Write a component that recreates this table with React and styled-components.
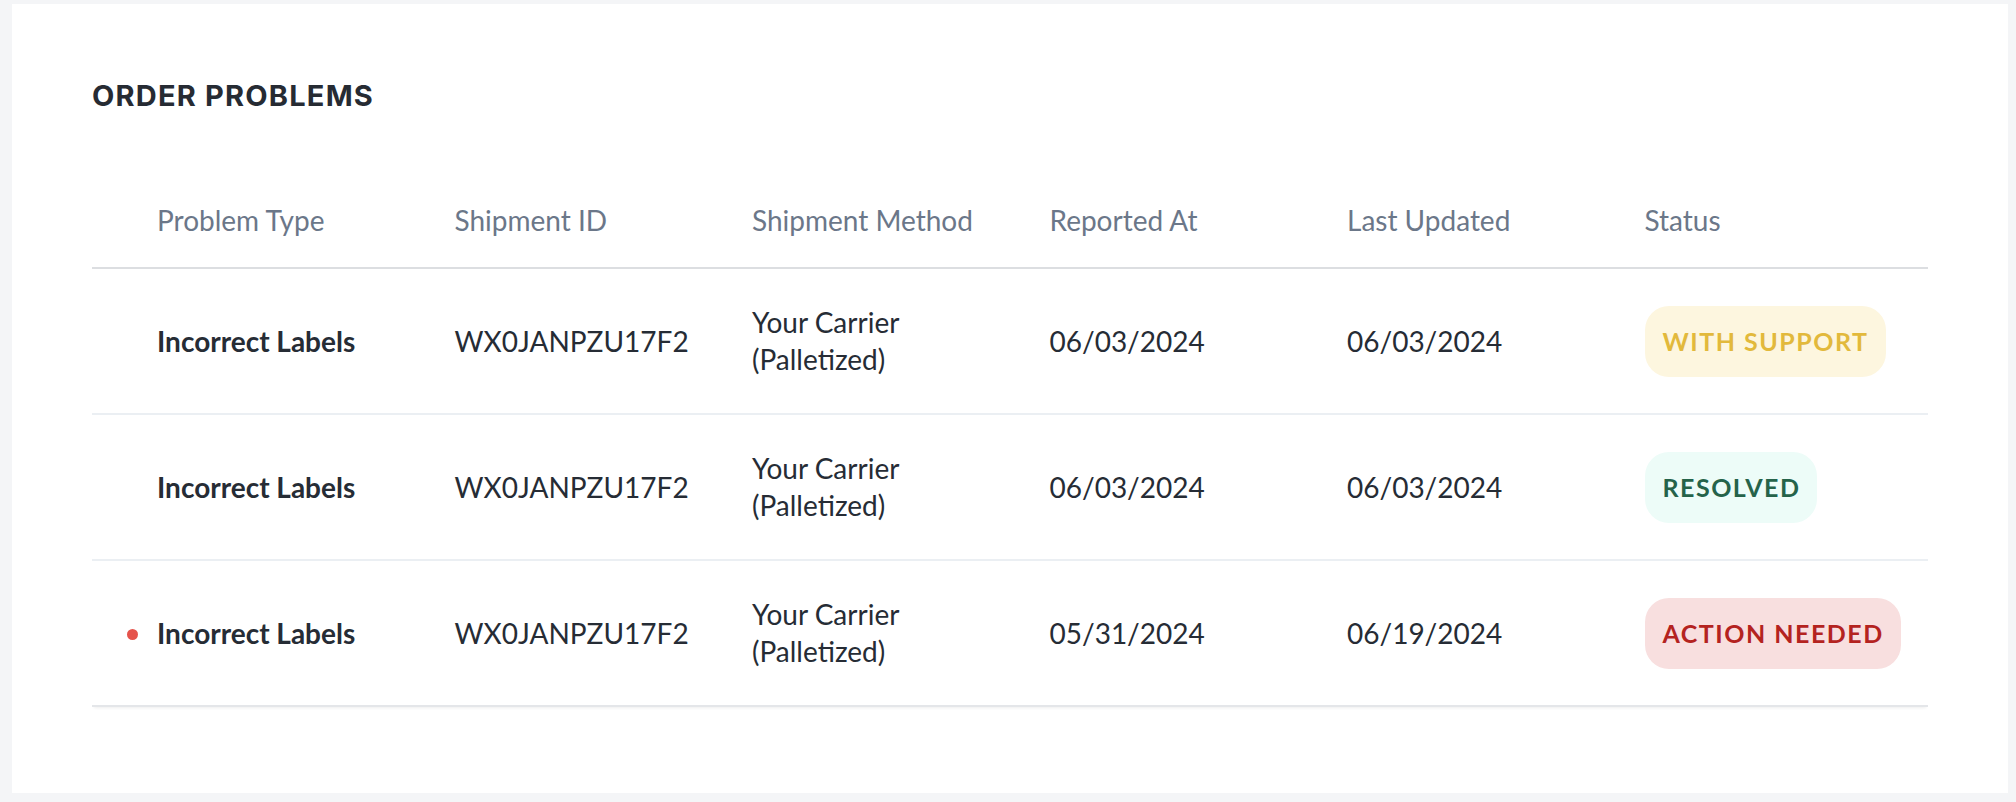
import styled, { createGlobalStyle } from 'styled-components';

const GlobalStyle = createGlobalStyle`
  html, body {
    margin: 0;
    background: #f4f5f7;
  }
  body {
    padding: 4px 8px 10px 12px;
    font-family: 'Lato', 'Noto Sans', sans-serif;
    color: #262c35;
  }
`;

const problems = [
  {
    type: 'Incorrect Labels',
    id: 'WX0JANPZU17F2',
    method: ['Your Carrier', '(Palletized)'],
    reported: '06/03/2024',
    updated: '06/03/2024',
    status: 'support',
  },
  {
    type: 'Incorrect Labels',
    id: 'WX0JANPZU17F2',
    method: ['Your Carrier', '(Palletized)'],
    reported: '06/03/2024',
    updated: '06/03/2024',
    status: 'resolved',
  },
  {
    type: 'Incorrect Labels',
    id: 'WX0JANPZU17F2',
    method: ['Your Carrier', '(Palletized)'],
    reported: '05/31/2024',
    updated: '06/19/2024',
    status: 'action',
    unread: true,
  },
];

const statuses = {
  support: { label: 'With Support', bg: '#fdf6df', fg: '#e2b93c' },
  resolved: { label: 'Resolved', bg: '#edfcf8', fg: '#25634a' },
  action: { label: 'Action Needed', bg: '#f8dfdf', fg: '#b4231f' },
};

const columns = ['Problem Type', 'Shipment ID', 'Shipment Method', 'Reported At', 'Last Updated', 'Status'];

export default function App() {
  return (
    <>
      <GlobalStyle />
      <Card>
        <Title>Order Problems</Title>
        <Table>
          <HeadRow>
            {columns.map((c) => (
              <HeadCell key={c}>{c}</HeadCell>
            ))}
          </HeadRow>
          {problems.map((p, i) => (
            <Row key={i} $last={i === problems.length - 1}>
              <TypeCell>
                {p.unread && <Dot />}
                {p.type}
              </TypeCell>
              <Cell>{p.id}</Cell>
              <Cell>
                {p.method[0]}
                <br />
                {p.method[1]}
              </Cell>
              <Cell>{p.reported}</Cell>
              <Cell>{p.updated}</Cell>
              <Cell>
                <Badge $bg={statuses[p.status].bg} $fg={statuses[p.status].fg}>
                  {statuses[p.status].label}
                </Badge>
              </Cell>
            </Row>
          ))}
        </Table>
      </Card>
    </>
  );
}

const Card = styled.section`
  background: #ffffff;
  padding: 74px 80px 86px;
`;

const Title = styled.h2`
  margin: 0 0 88px;
  font-family: 'Inter', 'Noto Sans', sans-serif;
  font-weight: 700;
  font-size: 29px;
  line-height: 36px;
  letter-spacing: 1.2px;
  text-transform: uppercase;
  color: #262b33;
`;

const Table = styled.div`
  display: flex;
  flex-direction: column;
`;

const grid = `
  display: grid;
  grid-template-columns: repeat(5, 297.5px) 1fr;
  padding-left: 65px;
`;

const HeadRow = styled.div`
  ${grid}
  padding-bottom: 29px;
  border-bottom: 2px solid #dcdee1;
`;

const HeadCell = styled.div`
  font-size: 28px;
  line-height: 36px;
  color: #6b7789;
`;

const Row = styled.div`
  ${grid}
  height: 144px;
  align-items: center;
  border-bottom: 2px solid ${({ $last }) => ($last ? '#e4e6e9' : '#ebeff3')};
  box-shadow: ${({ $last }) => ($last ? '0 3px 3px -2px rgba(0, 0, 0, 0.07)' : 'none')};
`;

const Cell = styled.div`
  font-size: 28px;
  line-height: 37px;
  color: #262c35;
`;

const TypeCell = styled(Cell)`
  position: relative;
  font-weight: 700;
`;

const Dot = styled.span`
  position: absolute;
  left: -30px;
  top: 50%;
  width: 11px;
  height: 11px;
  margin-top: -4px;
  border-radius: 50%;
  background: #e5534b;
`;

const Badge = styled.span`
  display: inline-flex;
  align-items: center;
  height: 71px;
  padding: 0 17px 0 18px;
  border-radius: 24px;
  background: ${({ $bg }) => $bg};
  color: ${({ $fg }) => $fg};
  font-weight: 700;
  font-size: 25px;
  letter-spacing: 1.5px;
  text-transform: uppercase;
`;
